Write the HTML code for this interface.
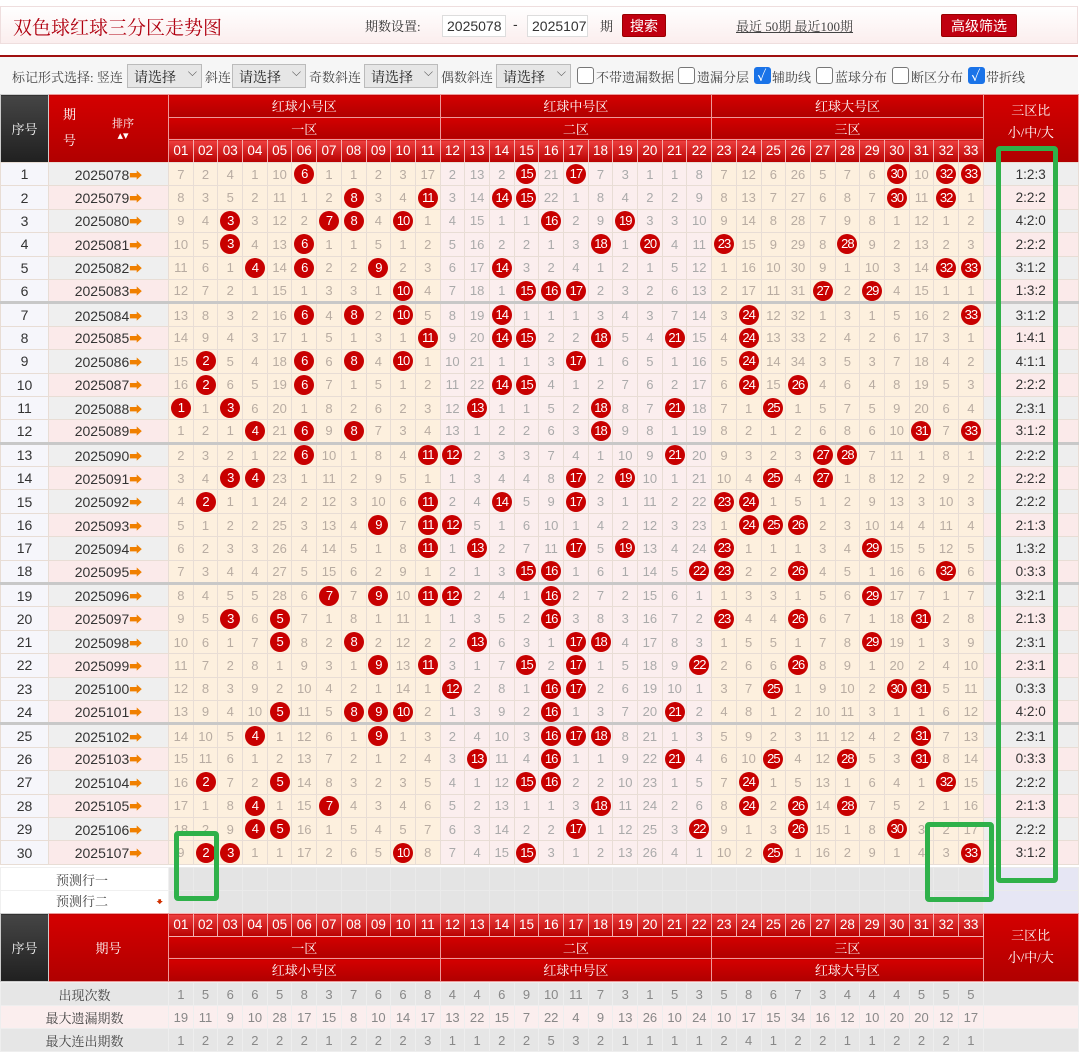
<!DOCTYPE html>
<html><head><meta charset="utf-8">
<style>
*{margin:0;padding:0;box-sizing:border-box}
body{width:1080px;height:1056px;background:#fff;position:relative;overflow:hidden;font-family:"Liberation Sans","Noto Sans CJK SC",sans-serif;color:#333}
.sf{font-family:"Liberation Serif","Noto Serif CJK SC",serif}
#top{position:absolute;left:0;top:6px;width:1078px;height:38px;background:linear-gradient(#fff,#fbeeee);border:1px solid #efdede}
#top .t{position:absolute;left:12px;top:6px;font-size:19px;color:#b00010}
.ab{position:absolute}
.inp{position:absolute;top:8px;height:22px;border:1px solid #ddd;background:#fff;font-size:14px;padding:2px 4px;color:#333}
.btn{position:absolute;top:7px;height:23px;background:#c00010;color:#fff;font-size:14px;text-align:center;line-height:23px;border:1px solid #900;border-radius:2px}
#opt{position:absolute;left:0;top:55px;width:1078px;height:39px;border-top:2px solid #a01010;background:#f6f6f6;font-size:13px;color:#444}
#opt span{position:absolute;top:10px}
.sel{position:absolute;top:7px;height:24px;border:1px solid #bbb;background:#e6e6e6;font-size:14px;padding:2px 6px;color:#222}
.sel:after{content:"⌵";position:absolute;right:4px;top:0;font-size:12px;color:#555}
.cb{position:absolute;top:10px;width:17px;height:17px;border:1px solid #777;border-radius:3px;background:#fff}
.cb.on{background:#1a73e8;border-color:#1a73e8}
.cb.on:after{content:"✓";color:#fff;font-size:14px;font-weight:bold;position:absolute;left:2px;top:-2px}
table{position:absolute;left:0;border-collapse:collapse;table-layout:fixed;width:1078px}
td{text-align:center;vertical-align:middle;overflow:hidden;white-space:nowrap;padding:0}
.h td{color:#fff;background:linear-gradient(#d40000,#b00000);border:1px solid #e99;font-size:13px;height:22.6px}
.h td.dk{background:linear-gradient(#454545,#202020);border-color:#ccc}
.h td.n{background:linear-gradient(#ee4040,#b80000);font-size:13.5px;font-family:"Liberation Sans",sans-serif;border-color:#f3b0b0}
.h td.rt{line-height:22px;font-size:13px;overflow:visible}
#d td{height:23.4px;border:1px solid #e8ddd5;font-size:13px;color:#b8aca2}
#d td:nth-child(1){background:#f6f6fb;color:#333;font-size:14px}
#d td:nth-child(2){color:#333;font-size:14px;background:#efefef}
#d tr:nth-child(even) td:nth-child(2){background:#fbeaea}
#d td:nth-child(n+3){background:#fdf0de}
#d td:nth-child(n+14){background:#fbeeee;color:#aaa}
#d td:nth-child(n+25){background:#fdf0de;color:#b8aca2}
#d td:nth-child(36){background:#eeeeee;color:#333;font-size:13.5px}
#d tr:nth-child(even) td:nth-child(36){background:#fbeaea}
#d tr.g td{border-top:3px solid #c8c8c8}
i{font-style:normal;color:#f08000;font-weight:bold;font-size:13px}
b{display:inline-block;width:20px;height:20px;border-radius:50%;background:#c80000;color:#fff;font-weight:normal;font-size:13px;line-height:20px;letter-spacing:-1px;vertical-align:middle}
#p td{height:23px;background:#e4e4e4;border:1px solid #eaeaea}
#p td.l{background:#fff;text-align:left;padding-left:55px;font-size:13px;color:#444;border-color:#f0f0f0}
#p td.r{background:#e6e6f4}
#s td{height:23px;border:1px solid #eee;font-size:13px;color:#888;background:#e6e6e6}
#s tr:nth-child(2) td{background:#fbeeee}
#s td.l{color:#444}
.gr{position:absolute;border:5px solid #2fb14a;border-radius:4px}
</style></head><body>
<div id="top"><div class="t sf">双色球红球三分区走势图</div>
<span class="ab sf" style="left:364px;top:9px;font-size:13px">期数设置:</span>
<div class="inp" style="left:441px;width:64px">2025078</div>
<span class="ab" style="left:512px;top:9px;font-size:14px">-</span>
<div class="inp" style="left:526px;width:61px">2025107</div>
<span class="ab sf" style="left:599px;top:9px;font-size:13px">期</span>
<div class="btn" style="left:621px;width:44px">搜索</div>
<span class="ab sf" style="left:735px;top:9px;font-size:13px;text-decoration:underline;color:#444">最近 50期 最近100期</span>
<div class="btn" style="left:940px;width:76px">高级筛选</div>
</div>
<div id="opt" class="sf">
<span style="left:12px">标记形式选择: 竖连</span>
<div class="sel" style="left:127px;width:75px">请选择</div>
<span style="left:205px">斜连</span>
<div class="sel" style="left:232px;width:74px">请选择</div>
<span style="left:309px">奇数斜连</span>
<div class="sel" style="left:364px;width:74px">请选择</div>
<span style="left:441px">偶数斜连</span>
<div class="sel" style="left:496px;width:75px">请选择</div>
<div class="cb" style="left:577px"></div><span style="left:596px">不带遗漏数据</span>
<div class="cb" style="left:678px"></div><span style="left:697px">遗漏分层</span>
<div class="cb on" style="left:754px"></div><span style="left:772px">辅助线</span>
<div class="cb" style="left:816px"></div><span style="left:835px">蓝球分布</span>
<div class="cb" style="left:892px"></div><span style="left:911px">断区分布</span>
<div class="cb on" style="left:968px"></div><span style="left:986px">带折线</span>
</div>

<table class="h sf" style="top:94px">
<colgroup><col style="width:48px"><col style="width:120px"><col span="33" style="width:24.7px"><col style="width:95px"></colgroup>
<tr><td rowspan="3" class="dk">序号</td><td rowspan="3"><span style="position:relative;left:-28px;display:inline-block;line-height:26px">期<br>号</span><span style="position:relative;left:8px;top:-6px;font-size:11px;display:inline-block;line-height:12px">排序<br>▴▾</span></td><td colspan="11">红球小号区</td><td colspan="11">红球中号区</td><td colspan="11">红球大号区</td><td rowspan="3" class="rt"><div style="position:relative;top:-6px">三区比<br>小/中/大</div></td></tr>
<tr><td colspan="11">一区</td><td colspan="11">二区</td><td colspan="11">三区</td></tr>
<tr><td class="n">01</td><td class="n">02</td><td class="n">03</td><td class="n">04</td><td class="n">05</td><td class="n">06</td><td class="n">07</td><td class="n">08</td><td class="n">09</td><td class="n">10</td><td class="n">11</td><td class="n">12</td><td class="n">13</td><td class="n">14</td><td class="n">15</td><td class="n">16</td><td class="n">17</td><td class="n">18</td><td class="n">19</td><td class="n">20</td><td class="n">21</td><td class="n">22</td><td class="n">23</td><td class="n">24</td><td class="n">25</td><td class="n">26</td><td class="n">27</td><td class="n">28</td><td class="n">29</td><td class="n">30</td><td class="n">31</td><td class="n">32</td><td class="n">33</td></tr>
</table>

<table id="d" style="top:162px">
<colgroup><col style="width:48px"><col style="width:120px"><col span="33" style="width:24.7px"><col style="width:95px"></colgroup>
<tr><td>1</td><td>2025078<i>➡</i></td><td>7</td><td>2</td><td>4</td><td>1</td><td>10</td><td><b>6</b></td><td>1</td><td>1</td><td>2</td><td>3</td><td>17</td><td>2</td><td>13</td><td>2</td><td><b>15</b></td><td>21</td><td><b>17</b></td><td>7</td><td>3</td><td>1</td><td>1</td><td>8</td><td>7</td><td>12</td><td>6</td><td>26</td><td>5</td><td>7</td><td>6</td><td><b>30</b></td><td>10</td><td><b>32</b></td><td><b>33</b></td><td>1:2:3</td></tr>
<tr><td>2</td><td>2025079<i>➡</i></td><td>8</td><td>3</td><td>5</td><td>2</td><td>11</td><td>1</td><td>2</td><td><b>8</b></td><td>3</td><td>4</td><td><b>11</b></td><td>3</td><td>14</td><td><b>14</b></td><td><b>15</b></td><td>22</td><td>1</td><td>8</td><td>4</td><td>2</td><td>2</td><td>9</td><td>8</td><td>13</td><td>7</td><td>27</td><td>6</td><td>8</td><td>7</td><td><b>30</b></td><td>11</td><td><b>32</b></td><td>1</td><td>2:2:2</td></tr>
<tr><td>3</td><td>2025080<i>➡</i></td><td>9</td><td>4</td><td><b>3</b></td><td>3</td><td>12</td><td>2</td><td><b>7</b></td><td><b>8</b></td><td>4</td><td><b>10</b></td><td>1</td><td>4</td><td>15</td><td>1</td><td>1</td><td><b>16</b></td><td>2</td><td>9</td><td><b>19</b></td><td>3</td><td>3</td><td>10</td><td>9</td><td>14</td><td>8</td><td>28</td><td>7</td><td>9</td><td>8</td><td>1</td><td>12</td><td>1</td><td>2</td><td>4:2:0</td></tr>
<tr><td>4</td><td>2025081<i>➡</i></td><td>10</td><td>5</td><td><b>3</b></td><td>4</td><td>13</td><td><b>6</b></td><td>1</td><td>1</td><td>5</td><td>1</td><td>2</td><td>5</td><td>16</td><td>2</td><td>2</td><td>1</td><td>3</td><td><b>18</b></td><td>1</td><td><b>20</b></td><td>4</td><td>11</td><td><b>23</b></td><td>15</td><td>9</td><td>29</td><td>8</td><td><b>28</b></td><td>9</td><td>2</td><td>13</td><td>2</td><td>3</td><td>2:2:2</td></tr>
<tr><td>5</td><td>2025082<i>➡</i></td><td>11</td><td>6</td><td>1</td><td><b>4</b></td><td>14</td><td><b>6</b></td><td>2</td><td>2</td><td><b>9</b></td><td>2</td><td>3</td><td>6</td><td>17</td><td><b>14</b></td><td>3</td><td>2</td><td>4</td><td>1</td><td>2</td><td>1</td><td>5</td><td>12</td><td>1</td><td>16</td><td>10</td><td>30</td><td>9</td><td>1</td><td>10</td><td>3</td><td>14</td><td><b>32</b></td><td><b>33</b></td><td>3:1:2</td></tr>
<tr><td>6</td><td>2025083<i>➡</i></td><td>12</td><td>7</td><td>2</td><td>1</td><td>15</td><td>1</td><td>3</td><td>3</td><td>1</td><td><b>10</b></td><td>4</td><td>7</td><td>18</td><td>1</td><td><b>15</b></td><td><b>16</b></td><td><b>17</b></td><td>2</td><td>3</td><td>2</td><td>6</td><td>13</td><td>2</td><td>17</td><td>11</td><td>31</td><td><b>27</b></td><td>2</td><td><b>29</b></td><td>4</td><td>15</td><td>1</td><td>1</td><td>1:3:2</td></tr>
<tr class="g"><td>7</td><td>2025084<i>➡</i></td><td>13</td><td>8</td><td>3</td><td>2</td><td>16</td><td><b>6</b></td><td>4</td><td><b>8</b></td><td>2</td><td><b>10</b></td><td>5</td><td>8</td><td>19</td><td><b>14</b></td><td>1</td><td>1</td><td>1</td><td>3</td><td>4</td><td>3</td><td>7</td><td>14</td><td>3</td><td><b>24</b></td><td>12</td><td>32</td><td>1</td><td>3</td><td>1</td><td>5</td><td>16</td><td>2</td><td><b>33</b></td><td>3:1:2</td></tr>
<tr><td>8</td><td>2025085<i>➡</i></td><td>14</td><td>9</td><td>4</td><td>3</td><td>17</td><td>1</td><td>5</td><td>1</td><td>3</td><td>1</td><td><b>11</b></td><td>9</td><td>20</td><td><b>14</b></td><td><b>15</b></td><td>2</td><td>2</td><td><b>18</b></td><td>5</td><td>4</td><td><b>21</b></td><td>15</td><td>4</td><td><b>24</b></td><td>13</td><td>33</td><td>2</td><td>4</td><td>2</td><td>6</td><td>17</td><td>3</td><td>1</td><td>1:4:1</td></tr>
<tr><td>9</td><td>2025086<i>➡</i></td><td>15</td><td><b>2</b></td><td>5</td><td>4</td><td>18</td><td><b>6</b></td><td>6</td><td><b>8</b></td><td>4</td><td><b>10</b></td><td>1</td><td>10</td><td>21</td><td>1</td><td>1</td><td>3</td><td><b>17</b></td><td>1</td><td>6</td><td>5</td><td>1</td><td>16</td><td>5</td><td><b>24</b></td><td>14</td><td>34</td><td>3</td><td>5</td><td>3</td><td>7</td><td>18</td><td>4</td><td>2</td><td>4:1:1</td></tr>
<tr><td>10</td><td>2025087<i>➡</i></td><td>16</td><td><b>2</b></td><td>6</td><td>5</td><td>19</td><td><b>6</b></td><td>7</td><td>1</td><td>5</td><td>1</td><td>2</td><td>11</td><td>22</td><td><b>14</b></td><td><b>15</b></td><td>4</td><td>1</td><td>2</td><td>7</td><td>6</td><td>2</td><td>17</td><td>6</td><td><b>24</b></td><td>15</td><td><b>26</b></td><td>4</td><td>6</td><td>4</td><td>8</td><td>19</td><td>5</td><td>3</td><td>2:2:2</td></tr>
<tr><td>11</td><td>2025088<i>➡</i></td><td><b>1</b></td><td>1</td><td><b>3</b></td><td>6</td><td>20</td><td>1</td><td>8</td><td>2</td><td>6</td><td>2</td><td>3</td><td>12</td><td><b>13</b></td><td>1</td><td>1</td><td>5</td><td>2</td><td><b>18</b></td><td>8</td><td>7</td><td><b>21</b></td><td>18</td><td>7</td><td>1</td><td><b>25</b></td><td>1</td><td>5</td><td>7</td><td>5</td><td>9</td><td>20</td><td>6</td><td>4</td><td>2:3:1</td></tr>
<tr><td>12</td><td>2025089<i>➡</i></td><td>1</td><td>2</td><td>1</td><td><b>4</b></td><td>21</td><td><b>6</b></td><td>9</td><td><b>8</b></td><td>7</td><td>3</td><td>4</td><td>13</td><td>1</td><td>2</td><td>2</td><td>6</td><td>3</td><td><b>18</b></td><td>9</td><td>8</td><td>1</td><td>19</td><td>8</td><td>2</td><td>1</td><td>2</td><td>6</td><td>8</td><td>6</td><td>10</td><td><b>31</b></td><td>7</td><td><b>33</b></td><td>3:1:2</td></tr>
<tr class="g"><td>13</td><td>2025090<i>➡</i></td><td>2</td><td>3</td><td>2</td><td>1</td><td>22</td><td><b>6</b></td><td>10</td><td>1</td><td>8</td><td>4</td><td><b>11</b></td><td><b>12</b></td><td>2</td><td>3</td><td>3</td><td>7</td><td>4</td><td>1</td><td>10</td><td>9</td><td><b>21</b></td><td>20</td><td>9</td><td>3</td><td>2</td><td>3</td><td><b>27</b></td><td><b>28</b></td><td>7</td><td>11</td><td>1</td><td>8</td><td>1</td><td>2:2:2</td></tr>
<tr><td>14</td><td>2025091<i>➡</i></td><td>3</td><td>4</td><td><b>3</b></td><td><b>4</b></td><td>23</td><td>1</td><td>11</td><td>2</td><td>9</td><td>5</td><td>1</td><td>1</td><td>3</td><td>4</td><td>4</td><td>8</td><td><b>17</b></td><td>2</td><td><b>19</b></td><td>10</td><td>1</td><td>21</td><td>10</td><td>4</td><td><b>25</b></td><td>4</td><td><b>27</b></td><td>1</td><td>8</td><td>12</td><td>2</td><td>9</td><td>2</td><td>2:2:2</td></tr>
<tr><td>15</td><td>2025092<i>➡</i></td><td>4</td><td><b>2</b></td><td>1</td><td>1</td><td>24</td><td>2</td><td>12</td><td>3</td><td>10</td><td>6</td><td><b>11</b></td><td>2</td><td>4</td><td><b>14</b></td><td>5</td><td>9</td><td><b>17</b></td><td>3</td><td>1</td><td>11</td><td>2</td><td>22</td><td><b>23</b></td><td><b>24</b></td><td>1</td><td>5</td><td>1</td><td>2</td><td>9</td><td>13</td><td>3</td><td>10</td><td>3</td><td>2:2:2</td></tr>
<tr><td>16</td><td>2025093<i>➡</i></td><td>5</td><td>1</td><td>2</td><td>2</td><td>25</td><td>3</td><td>13</td><td>4</td><td><b>9</b></td><td>7</td><td><b>11</b></td><td><b>12</b></td><td>5</td><td>1</td><td>6</td><td>10</td><td>1</td><td>4</td><td>2</td><td>12</td><td>3</td><td>23</td><td>1</td><td><b>24</b></td><td><b>25</b></td><td><b>26</b></td><td>2</td><td>3</td><td>10</td><td>14</td><td>4</td><td>11</td><td>4</td><td>2:1:3</td></tr>
<tr><td>17</td><td>2025094<i>➡</i></td><td>6</td><td>2</td><td>3</td><td>3</td><td>26</td><td>4</td><td>14</td><td>5</td><td>1</td><td>8</td><td><b>11</b></td><td>1</td><td><b>13</b></td><td>2</td><td>7</td><td>11</td><td><b>17</b></td><td>5</td><td><b>19</b></td><td>13</td><td>4</td><td>24</td><td><b>23</b></td><td>1</td><td>1</td><td>1</td><td>3</td><td>4</td><td><b>29</b></td><td>15</td><td>5</td><td>12</td><td>5</td><td>1:3:2</td></tr>
<tr><td>18</td><td>2025095<i>➡</i></td><td>7</td><td>3</td><td>4</td><td>4</td><td>27</td><td>5</td><td>15</td><td>6</td><td>2</td><td>9</td><td>1</td><td>2</td><td>1</td><td>3</td><td><b>15</b></td><td><b>16</b></td><td>1</td><td>6</td><td>1</td><td>14</td><td>5</td><td><b>22</b></td><td><b>23</b></td><td>2</td><td>2</td><td><b>26</b></td><td>4</td><td>5</td><td>1</td><td>16</td><td>6</td><td><b>32</b></td><td>6</td><td>0:3:3</td></tr>
<tr class="g"><td>19</td><td>2025096<i>➡</i></td><td>8</td><td>4</td><td>5</td><td>5</td><td>28</td><td>6</td><td><b>7</b></td><td>7</td><td><b>9</b></td><td>10</td><td><b>11</b></td><td><b>12</b></td><td>2</td><td>4</td><td>1</td><td><b>16</b></td><td>2</td><td>7</td><td>2</td><td>15</td><td>6</td><td>1</td><td>1</td><td>3</td><td>3</td><td>1</td><td>5</td><td>6</td><td><b>29</b></td><td>17</td><td>7</td><td>1</td><td>7</td><td>3:2:1</td></tr>
<tr><td>20</td><td>2025097<i>➡</i></td><td>9</td><td>5</td><td><b>3</b></td><td>6</td><td><b>5</b></td><td>7</td><td>1</td><td>8</td><td>1</td><td>11</td><td>1</td><td>1</td><td>3</td><td>5</td><td>2</td><td><b>16</b></td><td>3</td><td>8</td><td>3</td><td>16</td><td>7</td><td>2</td><td><b>23</b></td><td>4</td><td>4</td><td><b>26</b></td><td>6</td><td>7</td><td>1</td><td>18</td><td><b>31</b></td><td>2</td><td>8</td><td>2:1:3</td></tr>
<tr><td>21</td><td>2025098<i>➡</i></td><td>10</td><td>6</td><td>1</td><td>7</td><td><b>5</b></td><td>8</td><td>2</td><td><b>8</b></td><td>2</td><td>12</td><td>2</td><td>2</td><td><b>13</b></td><td>6</td><td>3</td><td>1</td><td><b>17</b></td><td><b>18</b></td><td>4</td><td>17</td><td>8</td><td>3</td><td>1</td><td>5</td><td>5</td><td>1</td><td>7</td><td>8</td><td><b>29</b></td><td>19</td><td>1</td><td>3</td><td>9</td><td>2:3:1</td></tr>
<tr><td>22</td><td>2025099<i>➡</i></td><td>11</td><td>7</td><td>2</td><td>8</td><td>1</td><td>9</td><td>3</td><td>1</td><td><b>9</b></td><td>13</td><td><b>11</b></td><td>3</td><td>1</td><td>7</td><td><b>15</b></td><td>2</td><td><b>17</b></td><td>1</td><td>5</td><td>18</td><td>9</td><td><b>22</b></td><td>2</td><td>6</td><td>6</td><td><b>26</b></td><td>8</td><td>9</td><td>1</td><td>20</td><td>2</td><td>4</td><td>10</td><td>2:3:1</td></tr>
<tr><td>23</td><td>2025100<i>➡</i></td><td>12</td><td>8</td><td>3</td><td>9</td><td>2</td><td>10</td><td>4</td><td>2</td><td>1</td><td>14</td><td>1</td><td><b>12</b></td><td>2</td><td>8</td><td>1</td><td><b>16</b></td><td><b>17</b></td><td>2</td><td>6</td><td>19</td><td>10</td><td>1</td><td>3</td><td>7</td><td><b>25</b></td><td>1</td><td>9</td><td>10</td><td>2</td><td><b>30</b></td><td><b>31</b></td><td>5</td><td>11</td><td>0:3:3</td></tr>
<tr><td>24</td><td>2025101<i>➡</i></td><td>13</td><td>9</td><td>4</td><td>10</td><td><b>5</b></td><td>11</td><td>5</td><td><b>8</b></td><td><b>9</b></td><td><b>10</b></td><td>2</td><td>1</td><td>3</td><td>9</td><td>2</td><td><b>16</b></td><td>1</td><td>3</td><td>7</td><td>20</td><td><b>21</b></td><td>2</td><td>4</td><td>8</td><td>1</td><td>2</td><td>10</td><td>11</td><td>3</td><td>1</td><td>1</td><td>6</td><td>12</td><td>4:2:0</td></tr>
<tr class="g"><td>25</td><td>2025102<i>➡</i></td><td>14</td><td>10</td><td>5</td><td><b>4</b></td><td>1</td><td>12</td><td>6</td><td>1</td><td><b>9</b></td><td>1</td><td>3</td><td>2</td><td>4</td><td>10</td><td>3</td><td><b>16</b></td><td><b>17</b></td><td><b>18</b></td><td>8</td><td>21</td><td>1</td><td>3</td><td>5</td><td>9</td><td>2</td><td>3</td><td>11</td><td>12</td><td>4</td><td>2</td><td><b>31</b></td><td>7</td><td>13</td><td>2:3:1</td></tr>
<tr><td>26</td><td>2025103<i>➡</i></td><td>15</td><td>11</td><td>6</td><td>1</td><td>2</td><td>13</td><td>7</td><td>2</td><td>1</td><td>2</td><td>4</td><td>3</td><td><b>13</b></td><td>11</td><td>4</td><td><b>16</b></td><td>1</td><td>1</td><td>9</td><td>22</td><td><b>21</b></td><td>4</td><td>6</td><td>10</td><td><b>25</b></td><td>4</td><td>12</td><td><b>28</b></td><td>5</td><td>3</td><td><b>31</b></td><td>8</td><td>14</td><td>0:3:3</td></tr>
<tr><td>27</td><td>2025104<i>➡</i></td><td>16</td><td><b>2</b></td><td>7</td><td>2</td><td><b>5</b></td><td>14</td><td>8</td><td>3</td><td>2</td><td>3</td><td>5</td><td>4</td><td>1</td><td>12</td><td><b>15</b></td><td><b>16</b></td><td>2</td><td>2</td><td>10</td><td>23</td><td>1</td><td>5</td><td>7</td><td><b>24</b></td><td>1</td><td>5</td><td>13</td><td>1</td><td>6</td><td>4</td><td>1</td><td><b>32</b></td><td>15</td><td>2:2:2</td></tr>
<tr><td>28</td><td>2025105<i>➡</i></td><td>17</td><td>1</td><td>8</td><td><b>4</b></td><td>1</td><td>15</td><td><b>7</b></td><td>4</td><td>3</td><td>4</td><td>6</td><td>5</td><td>2</td><td>13</td><td>1</td><td>1</td><td>3</td><td><b>18</b></td><td>11</td><td>24</td><td>2</td><td>6</td><td>8</td><td><b>24</b></td><td>2</td><td><b>26</b></td><td>14</td><td><b>28</b></td><td>7</td><td>5</td><td>2</td><td>1</td><td>16</td><td>2:1:3</td></tr>
<tr><td>29</td><td>2025106<i>➡</i></td><td>18</td><td>2</td><td>9</td><td><b>4</b></td><td><b>5</b></td><td>16</td><td>1</td><td>5</td><td>4</td><td>5</td><td>7</td><td>6</td><td>3</td><td>14</td><td>2</td><td>2</td><td><b>17</b></td><td>1</td><td>12</td><td>25</td><td>3</td><td><b>22</b></td><td>9</td><td>1</td><td>3</td><td><b>26</b></td><td>15</td><td>1</td><td>8</td><td><b>30</b></td><td>3</td><td>2</td><td>17</td><td>2:2:2</td></tr>
<tr><td>30</td><td>2025107<i>➡</i></td><td>9</td><td><b>2</b></td><td><b>3</b></td><td>1</td><td>1</td><td>17</td><td>2</td><td>6</td><td>5</td><td><b>10</b></td><td>8</td><td>7</td><td>4</td><td>15</td><td><b>15</b></td><td>3</td><td>1</td><td>2</td><td>13</td><td>26</td><td>4</td><td>1</td><td>10</td><td>2</td><td><b>25</b></td><td>1</td><td>16</td><td>2</td><td>9</td><td>1</td><td>4</td><td>3</td><td><b>33</b></td><td>3:1:2</td></tr>
</table>

<table id="p" class="sf" style="top:867px">
<colgroup><col style="width:48px"><col style="width:120px"><col span="33" style="width:24.7px"><col style="width:95px"></colgroup>
<tr><td colspan="2" class="l">预测行一</td><td></td><td></td><td></td><td></td><td></td><td></td><td></td><td></td><td></td><td></td><td></td><td></td><td></td><td></td><td></td><td></td><td></td><td></td><td></td><td></td><td></td><td></td><td></td><td></td><td></td><td></td><td></td><td></td><td></td><td></td><td></td><td></td><td></td><td class="r"></td></tr>
<tr><td colspan="2" class="l">预测行二<span style="color:#d03000;margin-left:48px;font-size:12px">🠻</span></td><td></td><td></td><td></td><td></td><td></td><td></td><td></td><td></td><td></td><td></td><td></td><td></td><td></td><td></td><td></td><td></td><td></td><td></td><td></td><td></td><td></td><td></td><td></td><td></td><td></td><td></td><td></td><td></td><td></td><td></td><td></td><td></td><td></td><td class="r"></td></tr>
</table>

<table class="h sf" style="top:913px">
<colgroup><col style="width:48px"><col style="width:120px"><col span="33" style="width:24.7px"><col style="width:95px"></colgroup>
<tr><td rowspan="3" class="dk">序号</td><td rowspan="3">期号</td><td class="n">01</td><td class="n">02</td><td class="n">03</td><td class="n">04</td><td class="n">05</td><td class="n">06</td><td class="n">07</td><td class="n">08</td><td class="n">09</td><td class="n">10</td><td class="n">11</td><td class="n">12</td><td class="n">13</td><td class="n">14</td><td class="n">15</td><td class="n">16</td><td class="n">17</td><td class="n">18</td><td class="n">19</td><td class="n">20</td><td class="n">21</td><td class="n">22</td><td class="n">23</td><td class="n">24</td><td class="n">25</td><td class="n">26</td><td class="n">27</td><td class="n">28</td><td class="n">29</td><td class="n">30</td><td class="n">31</td><td class="n">32</td><td class="n">33</td><td rowspan="3" class="rt">三区比<br>小/中/大</td></tr>
<tr><td colspan="11">一区</td><td colspan="11">二区</td><td colspan="11">三区</td></tr>
<tr><td colspan="11">红球小号区</td><td colspan="11">红球中号区</td><td colspan="11">红球大号区</td></tr>
</table>

<table id="s" style="top:982px">
<colgroup><col style="width:48px"><col style="width:120px"><col span="33" style="width:24.7px"><col style="width:95px"></colgroup>
<tr><td colspan="2" class="l sf">出现次数</td><td>1</td><td>5</td><td>6</td><td>6</td><td>5</td><td>8</td><td>3</td><td>7</td><td>6</td><td>6</td><td>8</td><td>4</td><td>4</td><td>6</td><td>9</td><td>10</td><td>11</td><td>7</td><td>3</td><td>1</td><td>5</td><td>3</td><td>5</td><td>8</td><td>6</td><td>7</td><td>3</td><td>4</td><td>4</td><td>4</td><td>5</td><td>5</td><td>5</td><td></td></tr>
<tr><td colspan="2" class="l sf">最大遗漏期数</td><td>19</td><td>11</td><td>9</td><td>10</td><td>28</td><td>17</td><td>15</td><td>8</td><td>10</td><td>14</td><td>17</td><td>13</td><td>22</td><td>15</td><td>7</td><td>22</td><td>4</td><td>9</td><td>13</td><td>26</td><td>10</td><td>24</td><td>10</td><td>17</td><td>15</td><td>34</td><td>16</td><td>12</td><td>10</td><td>20</td><td>20</td><td>12</td><td>17</td><td></td></tr>
<tr><td colspan="2" class="l sf">最大连出期数</td><td>1</td><td>2</td><td>2</td><td>2</td><td>2</td><td>2</td><td>1</td><td>2</td><td>2</td><td>2</td><td>3</td><td>1</td><td>1</td><td>2</td><td>2</td><td>5</td><td>3</td><td>2</td><td>1</td><td>1</td><td>1</td><td>1</td><td>2</td><td>4</td><td>1</td><td>2</td><td>2</td><td>1</td><td>1</td><td>2</td><td>2</td><td>2</td><td>1</td><td></td></tr>
</table>

<div class="gr" style="left:174px;top:831px;width:45px;height:70px"></div>
<div class="gr" style="left:925px;top:822px;width:69px;height:80px"></div>
<div class="gr" style="left:996px;top:146px;width:62px;height:737px"></div>
</body></html>
